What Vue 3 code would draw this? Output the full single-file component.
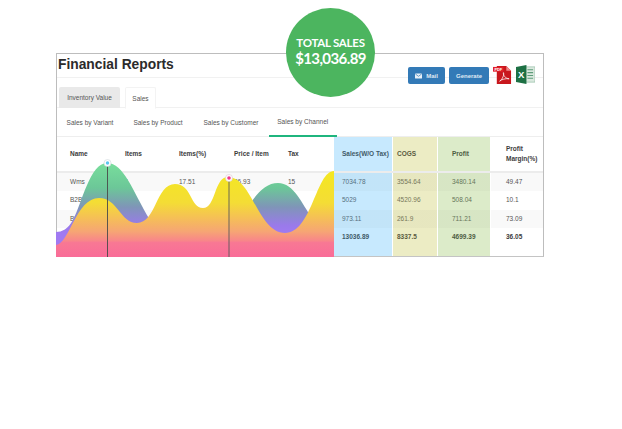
<script setup>
const subTabs = ['Sales by Variant', 'Sales by Product', 'Sales by Customer', 'Sales by Channel']

const headers = ['Name', 'Items', 'Items(%)', 'Price / Item', 'Tax', 'Sales(W/O Tax)', 'COGS', 'Profit', 'Profit Margin(%)']

// cells behind the chart are left empty where the reference shows nothing
const rows = [
  ['Wms', '1', '17.51', '26.93', '15', '7034.78', '3554.64', '3480.14', '49.47'],
  ['B2B', '', '', '', '', '5029', '4520.96', '508.04', '10.1'],
  ['B2C', '', '', '', '', '973.11', '261.9', '711.21', '73.09'],
  ['', '', '', '', '', '13036.89', '8337.5', '4699.39', '36.05']
]

// css class per column, first five are plain
const colClass = ['', '', '', '', '', 'blue', 'khaki', 'green', 'last']
</script>

<template>
  <div class="page">
    <div class="card">
      <div class="head">
        <h1>Financial Reports</h1>
        <div class="actions">
          <button class="btn mail">
            <svg width="7" height="6" viewBox="0 0 7 6">
              <rect x="0" y="0.5" width="7" height="5" rx="0.6" fill="#e8f0f7" />
              <path d="M0.4 1 L3.5 3.3 L6.6 1" fill="none" stroke="#337ab7" stroke-width="0.7" />
            </svg>
            Mail
          </button>
          <button class="btn generate">Generate</button>
          <svg class="file-icon" width="19" height="20" viewBox="0 0 20 21">
            <path d="M4 1 H14 L19 6 V20 H4 Z" fill="#c8171d" />
            <path d="M14 1 L19 6 H14 Z" fill="#f08a8a" />
            <rect x="0" y="2" width="11" height="5" fill="#e3202a" />
            <text x="5.5" y="6" class="pdf-tag">PDF</text>
            <path d="M7 17 C10 15 12 10 11 8 C10.5 11 13 14 17 14.5 C13 14 9.5 15 7 17 Z" fill="none" stroke="#fff" stroke-width="0.8" />
          </svg>
          <svg class="file-icon" width="19" height="19" viewBox="0 0 20 20">
            <rect x="7" y="2" width="13" height="16" fill="#dbe9df" stroke="#7fb095" stroke-width="0.6" />
            <path d="M12 5 H18 M12 8 H18 M12 11 H18 M12 14 H18" stroke="#5f9c7b" stroke-width="1.2" />
            <path d="M0 2 L11 0 V20 L0 18 Z" fill="#1d7044" />
            <text x="5.5" y="13.5" class="xls-tag">X</text>
          </svg>
        </div>
      </div>

      <div class="tabs">
        <div class="tab grey">Inventory Value</div>
        <div class="tab current">Sales</div>
      </div>

      <div class="subtabs">
        <div
          v-for="(t, i) in subTabs"
          :key="t"
          class="subtab"
          :class="{ active: i === 3 }"
        >{{ t }}</div>
      </div>

      <div class="table">
        <div class="row header">
          <div v-for="(h, i) in headers" :key="h" class="cell" :class="colClass[i]">{{ h }}</div>
        </div>
        <div
          v-for="(r, n) in rows"
          :key="n"
          class="row"
          :class="{ striped: n % 2 === 0, total: n === 3 }"
        >
          <div v-for="(c, i) in r" :key="i" class="cell" :class="colClass[i]">{{ c }}</div>
        </div>
        <div class="row tail">
          <div v-for="(h, i) in headers" :key="h" class="cell" :class="colClass[i]"></div>
        </div>

        <!-- chart sits on top of the left part of the table -->
        <svg class="chart" width="278" height="120" viewBox="56 137 278 120">
          <defs>
            <linearGradient id="backWave" gradientUnits="userSpaceOnUse" x1="0" y1="163" x2="0" y2="234">
              <stop offset="0" stop-color="#78de9c" />
              <stop offset="0.35" stop-color="#6cc798" />
              <stop offset="0.62" stop-color="#7f95b8" />
              <stop offset="0.88" stop-color="#9a7aea" />
              <stop offset="1" stop-color="#a07af2" />
            </linearGradient>
            <linearGradient id="frontWave" gradientUnits="userSpaceOnUse" x1="0" y1="172" x2="0" y2="257">
              <stop offset="0" stop-color="#f4e722" />
              <stop offset="0.36" stop-color="#f4dd35" />
              <stop offset="0.7" stop-color="#f6a574" />
              <stop offset="0.81" stop-color="#f8858a" />
              <stop offset="0.83" stop-color="#f87894" />
              <stop offset="1" stop-color="#f96c98" />
            </linearGradient>
          </defs>
          <path
            d="M56 232 C62 232 68 229 73 220 C82 203 90 163 107 163 C124 163 132 190 150 220 L240 220 C252 200 262 183 278 183 C294 183 302 204 312 218 L312 240 L200 250 L56 250 Z"
            fill="url(#backWave)"
          />
          <path
            d="M56 245 C70 243 76 198 99 198 C118 198 120 223 137 223 C156 223 156 184 175 184 C192 184 190 208 203 208 C216 208 214 177 228 177 C252 177 258 233 285 233 C312 233 316 171 334 171 L334 257 L56 257 Z"
            fill="url(#frontWave)"
          />
          <line x1="107.5" y1="164" x2="107.5" y2="257" stroke="#4a4a4a" stroke-width="0.9" />
          <line x1="229" y1="178" x2="229" y2="257" stroke="#5a5a5a" stroke-width="0.9" />
          <circle cx="107.5" cy="163" r="3.5" fill="#fff" stroke="#cfd6dc" stroke-width="0.6" />
          <circle cx="107.5" cy="163" r="1.7" fill="#5cc6ee" />
          <circle cx="229" cy="178" r="3.5" fill="#fff" stroke="#d8c8d0" stroke-width="0.6" />
          <circle cx="229" cy="178" r="1.8" fill="#f0388a" />
        </svg>
      </div>

      <div class="badge">
        <div class="badge-label">TOTAL SALES</div>
        <div class="badge-value">$13,036.89</div>
      </div>
    </div>
  </div>
</template>

<style scoped>
.page {
  width: 622px;
  height: 429px;
  padding: 53px 0 0 56px;
  box-sizing: border-box;
  background: #fff;
  font-family: "Liberation Sans", Arial, sans-serif;
}

.card {
  position: relative;
  width: 488px;
  height: 204px;
  box-sizing: border-box;
  border: 1px solid #bdbdbd;
  border-bottom-color: #c4c4c4;
  display: flex;
  flex-direction: column;
}

.head {
  height: 23px;
  display: flex;
  align-items: flex-start;
  justify-content: space-between;
  border-bottom: 1px solid #f1f1f1;
}

h1 {
  margin: 2px 0 0 1px;
  font-size: 13.8px;
  line-height: 17px;
  font-weight: 700;
  color: #2b2b2b;
}

.actions {
  display: flex;
  align-items: flex-start;
  gap: 4px;
  margin: 11px 8px 0 0;
  height: 24px;
  position: relative;
}

.btn {
  height: 17px;
  padding: 0;
  border: none;
  border-radius: 2px;
  background: #337ab7;
  color: #dfe9f3;
  font-family: inherit;
  font-size: 6px;
  font-weight: 700;
  display: flex;
  align-items: center;
  justify-content: center;
  gap: 4px;
  margin-top: 2px;
}

.btn.mail {
  width: 37px;
}

.btn.generate {
  width: 40px;
}

.file-icon {
  display: block;
}

.pdf-tag {
  font-size: 4px;
  font-weight: 700;
  fill: #fff;
  text-anchor: middle;
}

.xls-tag {
  font-size: 10px;
  font-weight: 700;
  fill: #fff;
  text-anchor: middle;
}

.tabs {
  height: 30px;
  padding: 9px 0 0 2px;
  box-sizing: border-box;
  display: flex;
  gap: 5px;
  border-bottom: 1px solid #f1f1f1;
  font-size: 6.5px;
  color: #555;
}

.tab {
  height: 21px;
  display: flex;
  align-items: center;
  justify-content: center;
  border-radius: 2px 2px 0 0;
}

.tab.grey {
  width: 61px;
  background: #e9e9e9;
}

.tab.current {
  width: 31px;
  border: 1px solid #f3f3f3;
  border-bottom-color: #fff;
  box-sizing: border-box;
  height: 22px;
  background: #fff;
}

.subtabs {
  height: 29px;
  box-sizing: border-box;
  display: flex;
  border-bottom: 1px solid #eee;
  font-size: 6.5px;
  color: #555;
}

.subtab {
  height: 29px;
  box-sizing: border-box;
  display: flex;
  align-items: center;
  justify-content: center;
  width: 67.5px;
}

.subtab.active {
  border-bottom: 2px solid #1fb57e;
}

.subtab:nth-child(1) {
  width: 66px;
}

.subtab:nth-child(2) {
  width: 70px;
}

.subtab:nth-child(3) {
  width: 76px;
}

.table {
  position: relative;
  flex: 1;
  display: flex;
  flex-direction: column;
  font-size: 6.5px;
  color: #555;
}

.row {
  display: grid;
  grid-template-columns: 55px 54px 55px 54px 59px 59px 45px 53px 1fr;
  height: 18.3px;
  flex: none;
}

.row.header {
  height: 36px;
  font-weight: 700;
  color: #3c3c3c;
  border-bottom: 2px solid #ececec;
  box-sizing: border-box;
}

.row.tail {
  flex: 1;
}

.row.total {
  font-weight: 700;
  color: #3c3c3c;
}

.cell {
  display: flex;
  align-items: center;
  padding-left: 13px;
  box-sizing: border-box;
  line-height: 10px;
}

.row.striped .cell {
  background-image: linear-gradient(rgba(0, 0, 0, 0.025), rgba(0, 0, 0, 0.025));
}

.cell.blue {
  background-color: #c7e9fe;
  padding-left: 8px;
  color: #56707f;
  margin-right: 1px;
}

.cell.khaki {
  background-color: #ececc4;
  padding-left: 4px;
  color: #77775a;
  margin-right: 1px;
}

.cell.green {
  background-color: #dcebc9;
  padding-left: 14px;
  color: #66755a;
  margin-right: 1px;
}

.cell.last {
  padding-left: 15px;
  padding-right: 10px;
}

.row.total .cell.blue,
.row.header .cell.blue {
  color: #3f5a68;
}

.row.total .cell.khaki,
.row.header .cell.khaki {
  color: #5a5a40;
}

.row.total .cell.green,
.row.header .cell.green {
  color: #4d5c42;
}

.chart {
  position: absolute;
  left: -1px;
  bottom: -1px;
  display: block;
}

.badge {
  position: absolute;
  left: 229px;
  top: -46px;
  width: 89px;
  height: 89px;
  padding-bottom: 4px;
  box-sizing: border-box;
  border-radius: 50%;
  background: #4cb55f;
  color: #fff;
  font-family: Lato, "Open Sans", sans-serif;
  display: flex;
  flex-direction: column;
  align-items: center;
  justify-content: center;
  font-weight: 700;
}

.badge-label {
  font-size: 11.5px;
  line-height: 14px;
  letter-spacing: -0.25px;
}

.badge-value {
  font-size: 15px;
  line-height: 16px;
  letter-spacing: -0.6px;
}
</style>
